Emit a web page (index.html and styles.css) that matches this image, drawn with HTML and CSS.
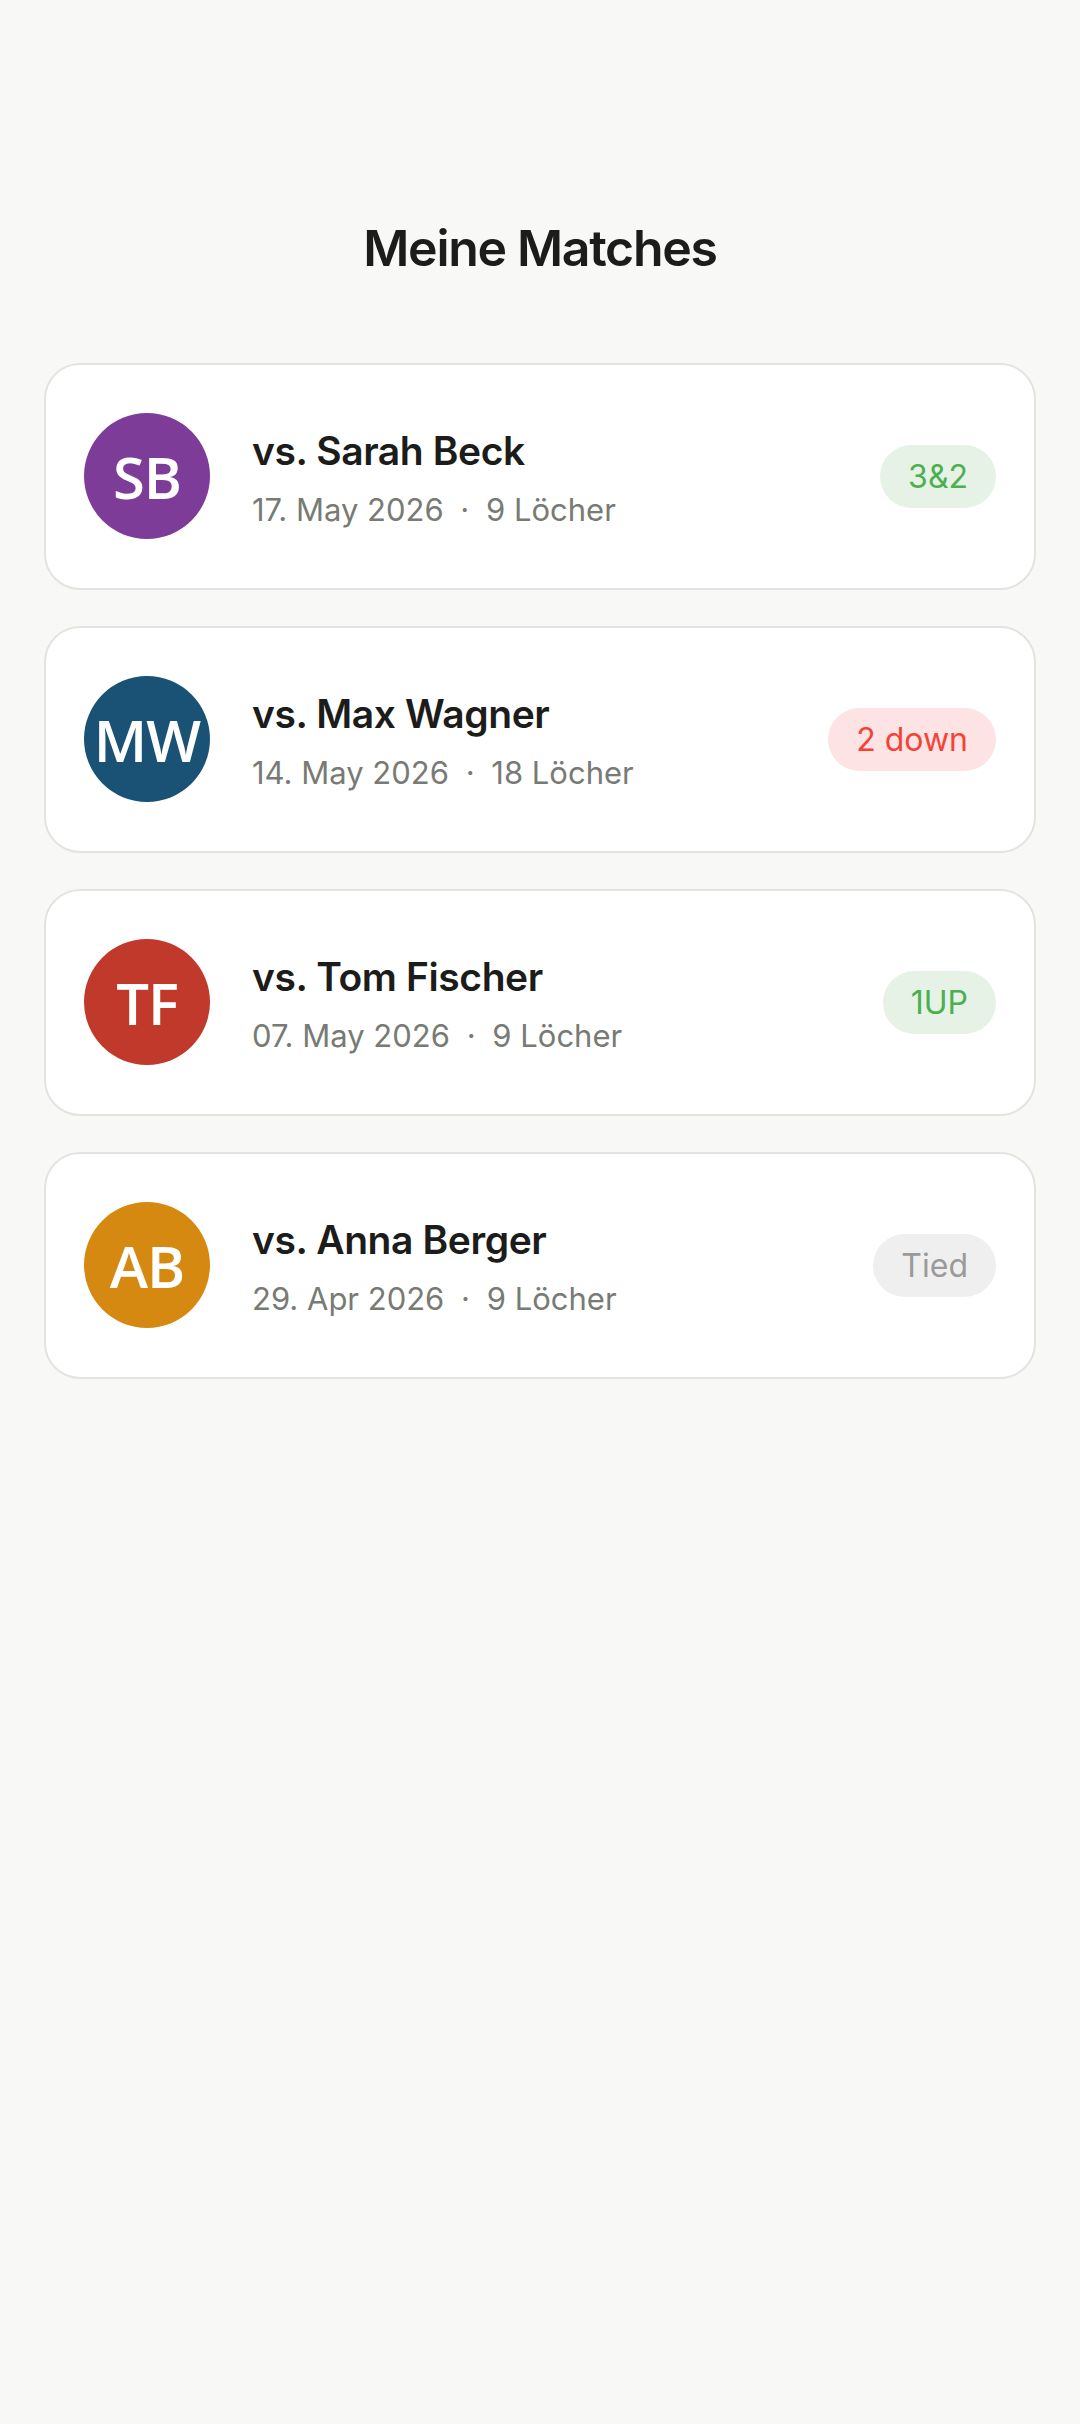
FILE: index.html
```html
<!DOCTYPE html>
<html lang="de">
<head>
    <meta charset="UTF-8">
    <meta name="viewport" content="width=device-width, initial-scale=1.0">
    <title>Meine Matches</title>
    <link rel="stylesheet" href="styles.css">
</head>
<body>
    <main class="page">
        <h1 class="title">Meine Matches</h1>
        <ul class="matches">
            <li class="match">
                <div class="avatar purple">SB</div>
                <div class="info">
                    <h2>vs. Sarah Beck</h2>
                    <p>17. May 2026 <span class="dot">·</span> 9 Löcher</p>
                </div>
                <span class="badge win">3&amp;2</span>
            </li>
            <li class="match">
                <div class="avatar blue">MW</div>
                <div class="info">
                    <h2>vs. Max Wagner</h2>
                    <p>14. May 2026 <span class="dot">·</span> 18 Löcher</p>
                </div>
                <span class="badge loss">2 down</span>
            </li>
            <li class="match">
                <div class="avatar red">TF</div>
                <div class="info">
                    <h2>vs. Tom Fischer</h2>
                    <p>07. May 2026 <span class="dot">·</span> 9 Löcher</p>
                </div>
                <span class="badge win">1UP</span>
            </li>
            <li class="match">
                <div class="avatar orange">AB</div>
                <div class="info">
                    <h2>vs. Anna Berger</h2>
                    <p>29. Apr 2026 <span class="dot">·</span> 9 Löcher</p>
                </div>
                <span class="badge tied">Tied</span>
            </li>
        </ul>
    </main>
</body>
</html>
```

FILE: styles.css
```css
*{
    margin: 0;
    padding: 0;
    box-sizing: border-box;
}

html, body{
    height: 100%;
}

body{
    background-color: #f8f8f6;
    font-family: Inter, "Noto Sans", sans-serif;
    color: #1c1c1a;
}

.page{
    padding: 216px 44px 0;
}

.title{
    font-size: 50px;
    line-height: 64px;
    font-weight: 600;
    text-align: center;
    letter-spacing: -1.3px;
    margin-bottom: 83px;
}

.matches{
    list-style: none;
    display: flex;
    flex-direction: column;
    gap: 36px;
}

.match{
    display: flex;
    align-items: center;
    background-color: #fff;
    border: 2px solid #e3e3df;
    border-radius: 36px;
    padding: 48px 38px 49px;
}

.avatar{
    width: 126px;
    height: 126px;
    border-radius: 50%;
    flex-shrink: 0;
    display: flex;
    align-items: center;
    justify-content: center;
    color: #fff;
    font-family: "Open Sans", sans-serif;
    font-size: 58px;
    font-weight: 600;
    letter-spacing: -1px;
}
.purple{ background-color: #7d3c98; }
.blue{ background-color: #1a5276; }
.red{ background-color: #c0392b; }
.orange{ background-color: #d68910; }

.info{
    flex: 1;
    margin-left: 42px;
    padding-top: 6px;
}
.info h2{
    font-size: 39px;
    line-height: 44px;
    font-weight: 600;
    letter-spacing: -0.4px;
}
.info p{
    margin-top: 17px;
    font-size: 31px;
    line-height: 40px;
    color: #787a74;
}
.info .dot{
    margin: 0 8px;
}

.badge{
    border-radius: 32px;
    padding: 0 28px;
    height: 63px;
    display: flex;
    align-items: center;
    font-size: 32px;
}
.win{
    background-color: #e5f2e5;
    color: #4caf50;
}
.loss{
    background-color: #fde3e3;
    color: #f44336;
}
.tied{
    background-color: #efefef;
    color: #9a9a9a;
}
```
